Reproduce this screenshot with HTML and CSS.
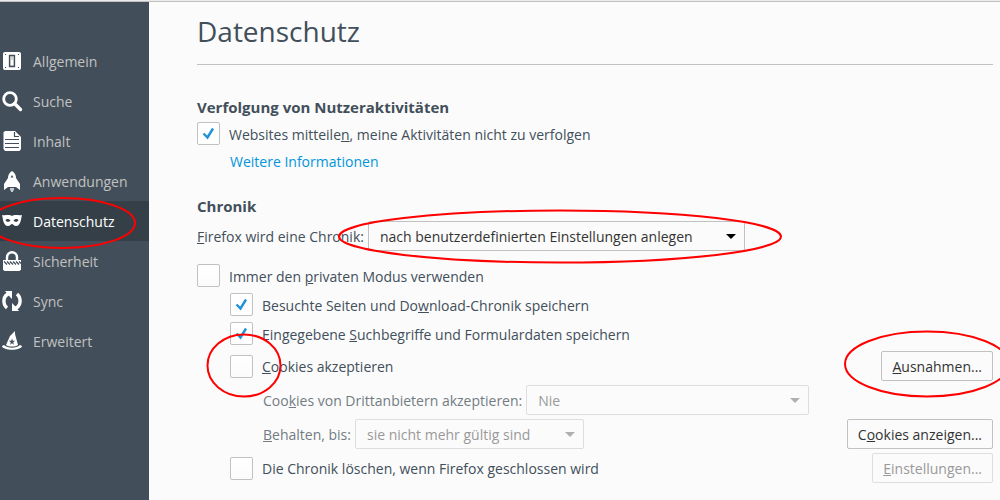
FILE: index.html
```
<!DOCTYPE html>
<html lang="de">
<head>
    <meta charset="UTF-8">
    <meta name="viewport" content="width=device-width, initial-scale=1.0">
    <title>Einstellungen - Datenschutz</title>
    <link rel="stylesheet" href="styles.css">
</head>
<body>
    <nav class="sidebar">
        <a class="category" href="#allgemein">
            <svg class="icon" viewBox="0 0 20 20">
                <rect x="1" y="1" width="18" height="18" rx="2"/>
                <path fill="#424f5a" d="M3 3h1v1H3zM16 3h1v1h-1zM3 16h1v1H3zM16 16h1v1h-1z"/>
                <path fill="#d5d8da" stroke="#424f5a" stroke-width="1.3" d="M7.500 4.500h5v11h-5z"/>
                <path fill="#fff" d="M9 9h2v5H9z"/>
            </svg>
            <span>Allgemein</span>
        </a>
        <a class="category" href="#suche">
            <svg class="icon" viewBox="0 0 20 20">
                <circle cx="8" cy="8" r="6.3" fill="none" stroke="#fff" stroke-width="2.8"/>
                <path d="M12.5 12.5l6 6" stroke="#fff" stroke-width="3.4" stroke-linecap="round"/>
            </svg>
            <span>Suche</span>
        </a>
        <a class="category" href="#inhalt">
            <svg class="icon" viewBox="0 0 20 20">
                <path d="M3 0h10l6 6v12l-1.500 2H3l-1.500-2V1.500z"/>
                <path fill="none" stroke="#424f5a" stroke-width="1.2" d="M12.500 1v4.500H17M3 8.500h14M3 12.500h14M3 16.500h14"/>
            </svg>
            <span>Inhalt</span>
        </a>
        <a class="category" href="#anwendungen">
            <svg class="icon" viewBox="0 0 20 20">
                <path fill-rule="evenodd" d="M10 0c3 2 4 4 4 7l4 6v6l-4-3H6l-4 3v-6l4-6c0-3 1-5 4-7zM8.500 6.500h3L10 4z"/>
                <path fill="#c3c8cc" d="M8 17h4v2l-1 1v1H9v-1l-1-1z"/>
            </svg>
            <span>Anwendungen</span>
        </a>
        <a class="category selected" href="#datenschutz">
            <svg class="icon" viewBox="0 0 20 20">
                <path d="M0 4c3 1 7-1 10 1 3-2 7 0 10-1-1 3-1 11-6 11-2 0-3-2-4-2s-2 2-4 2C1 15 1 7 0 4z"/>
                <path fill="#343f48" d="M3.500 9c1-1.500 3.500-1.500 5 .5-1.500 2-4.500 1.500-5-.5zM16.500 9c-1-1.500-3.500-1.500-5 .5 1.500 2 4.500 1.500 5-.5z"/>
            </svg>
            <span>Datenschutz</span>
        </a>
        <a class="category" href="#sicherheit">
            <svg class="icon" viewBox="0 0 20 20">
                <path d="M5 10V6.500c0-7 10-7 10 0V10" fill="none" stroke="#fff" stroke-width="2.4"/>
                <path d="M1 9h18v9.500L17.500 20h-15L1 18.500z"/>
                <path d="M2 10.500l3 3M5 10.500l3 3M8 10.500l3 3M11 10.500l3 3M14 10.500l3 3M17 10.500l2 2" stroke="#424f5a" stroke-width="1.3"/>
            </svg>
            <span>Sicherheit</span>
        </a>
        <a class="category" href="#sync">
            <svg class="icon" viewBox="0 0 20 20">
                <path d="M8 2.500C.5 4 .5 13 5 17M12 17.500c7.500-1.500 7.500-10.500 3-14.500" fill="none" stroke="#fff" stroke-width="3.4"/>
                <path d="M3 0h7v8L8 6zM17 20h-7v-8l2 2z"/>
            </svg>
            <span>Sync</span>
        </a>
        <a class="category" href="#erweitert">
            <svg class="icon" viewBox="0 0 20 20">
                <path fill-rule="evenodd" d="M13 0v3l3 11c-3 2-9 2-12 0l4-9zM10 7.500l-.8 2.300H6.800l2 1.500-.8 2.400 2-1.500 2 1.500-.8-2.400 2-1.500h-2.400z"/>
                <path d="M0 15l2-1c4 3.500 12 3.500 16 0l2 1c-1 5-19 5-20 0z"/>
            </svg>
            <span>Erweitert</span>
        </a>
    </nav>

    <main class="pane">
        <h1 class="title">Datenschutz</h1>

        <section class="group">
            <h2 class="caption">Verfolgung von Nutzeraktivitäten</h2>
            <div class="check-row">
                <input type="checkbox" class="checkbox" id="track" checked>
                <label for="track">Websites mitteile<u>n</u>, meine Aktivitäten nicht zu verfolgen</label>
            </div>
            <a class="link" href="#info">Weitere Informationen</a>
        </section>

        <section class="group">
            <h2 class="caption">Chronik</h2>
            <div class="row">
                <label for="history"><u>F</u>irefox wird eine Chronik:</label>
                <select class="menu menu-history" id="history">
                    <option>nach benutzerdefinierten Einstellungen anlegen</option>
                </select>
            </div>
            <div class="check-row private">
                <input type="checkbox" class="checkbox" id="private">
                <label for="private">Immer den <u>p</u>rivaten Modus verwenden</label>
            </div>
            <div class="custom">
                <div class="check-row">
                    <input type="checkbox" class="checkbox" id="visited" checked>
                    <label for="visited">Besuchte Seiten und Do<u>w</u>nload-Chronik speichern</label>
                </div>
                <div class="check-row">
                    <input type="checkbox" class="checkbox" id="forms" checked>
                    <label for="forms">Eingegebene <u>S</u>uchbegriffe und Formulardaten speichern</label>
                </div>
                <div class="row">
                    <input type="checkbox" class="checkbox" id="cookies">
                    <label for="cookies"><u>C</u>ookies akzeptieren</label>
                    <button class="button"><u>A</u>usnahmen...</button>
                </div>
                <div class="row sub">
                    <label for="third">Coo<u>k</u>ies von Drittanbietern akzeptieren:</label>
                    <select class="menu menu-third" id="third" disabled>
                        <option>Nie</option>
                    </select>
                </div>
                <div class="row sub">
                    <label for="keep"><u>B</u>ehalten, bis:</label>
                    <select class="menu menu-keep" id="keep" disabled>
                        <option>sie nicht mehr gültig sind</option>
                    </select>
                    <button class="button">C<u>o</u>okies anzeigen...</button>
                </div>
                <div class="row">
                    <input type="checkbox" class="checkbox" id="clear">
                    <label for="clear">Die Chronik löschen, wenn Firefox <u>g</u>eschlossen wird</label>
                    <button class="button" disabled><u>E</u>instellungen...</button>
                </div>
            </div>
        </section>
    </main>

    <!-- red markers around the important settings -->
    <svg class="markers" viewBox="0 0 1000 500" aria-hidden="true">
        <ellipse cx="62" cy="223" rx="73" ry="25"/>
        <ellipse cx="560" cy="236.500" rx="221" ry="26"/>
        <ellipse cx="244" cy="365.500" rx="36.500" ry="31"/>
        <ellipse cx="927" cy="364" rx="82" ry="32.500"/>
    </svg>
</body>
</html>
```
FILE: styles.css
```
* {
    box-sizing: border-box;
}

body {
    margin: 0;
    min-height: 100vh;
    display: flex;
    position: relative;
    overflow: hidden;
    border-top: 1px solid #ececec;
    background-color: #fbfbfb;
    color: #424f5a;
    font-family: "Segoe UI", "Open Sans", sans-serif;
    font-size: 14px;
    line-height: 20px;
}

.sidebar {
    flex: none;
    width: 149px;
    padding-top: 39px;
    border-top: 1px solid #c1c1c1;
    background-color: #424f5a;
}

.category {
    display: flex;
    align-items: center;
    gap: 11px;
    height: 40px;
    padding-left: 2px;
    color: #c1c1c1;
    text-decoration: none;
}

.category span {
    padding-top: 2px;
}

.category.selected {
    background-color: #343f48;
    color: #fff;
}

.icon {
    width: 20px;
    height: 20px;
    fill: #fff;
    overflow: visible;
}

.pane {
    flex: 1;
    padding: 0 7px 0 48px;
    border-top: 1px solid #c1c1c1;
}

.title {
    margin: 0 0 32px;
    padding: 9px 0 13px;
    border-bottom: 1px solid #c1c1c1;
    font-size: 28px;
    font-weight: normal;
    line-height: 40px;
}

.group {
    margin-bottom: 24px;
}

.caption {
    margin: 0 0 5px;
    font-size: 15px;
    font-weight: bold;
    line-height: 20px;
}

.check-row,
.row {
    display: flex;
    align-items: center;
    white-space: nowrap;
}

.check-row {
    align-items: flex-start;
    height: 24px;
    margin-bottom: 5px;
}

.check-row label {
    padding-top: 3px;
}

.row {
    height: 30px;
    margin-bottom: 4px;
}

.row label {
    padding-top: 2px;
}

.private {
    margin-top: 13px;
}

.custom {
    padding-left: 33px;
}

.sub {
    padding-left: 33px;
    color: #737b83;
}

.link {
    display: block;
    margin-left: 33px;
    padding-top: 1px;
    color: #0095dd;
    text-decoration: none;
}

.checkbox {
    appearance: none;
    flex: none;
    width: 23px;
    height: 23px;
    margin: 0 9px 0 0;
    border: 1px solid #c1c1c1;
    border-radius: 2px;
    background: linear-gradient(#fff, #fbfbfb);
}

.checkbox:checked {
    background: url("data:image/svg+xml,%3Csvg xmlns='http://www.w3.org/2000/svg' viewBox='0 0 21 21'%3E%3Cpath d='M5.500 10.500l4 4L15 5.500' fill='none' stroke='%232292d8' stroke-width='2.400'/%3E%3C/svg%3E") #fff;
}

.menu {
    appearance: none;
    height: 30px;
    margin-left: 4px;
    padding: 2px 30px 0 11px;
    border: 1px solid #c1c1c1;
    border-radius: 2px;
    background: url("data:image/svg+xml,%3Csvg xmlns='http://www.w3.org/2000/svg' viewBox='0 0 10 5'%3E%3Cpath d='M0 0h10L5 5z'/%3E%3C/svg%3E") no-repeat right 8px center / 10px 5px #fbfbfb;
    color: #333;
    font: inherit;
}

.menu:disabled {
    background-image: url("data:image/svg+xml,%3Csvg xmlns='http://www.w3.org/2000/svg' viewBox='0 0 10 5'%3E%3Cpath d='M0 0h10L5 5z' fill='%23b0b0b0'/%3E%3C/svg%3E");
    border-color: #dedede;
    color: #999;
    opacity: 1;
}

.menu-history {
    width: 377px;
}

.menu-third {
    width: 283px;
}

.menu-keep {
    width: 229px;
}

.button {
    height: 30px;
    margin-left: auto;
    padding: 2px 10px 0;
    border: 1px solid #c1c1c1;
    border-radius: 2px;
    background-color: #fbfbfb;
    color: #333;
    font: inherit;
}

.button:disabled {
    border-color: #dedede;
    color: #999;
}

.markers {
    position: absolute;
    top: -1px;
    left: 0;
    width: 1000px;
    height: 500px;
    fill: none;
    stroke: #f00;
    stroke-width: 2;
    pointer-events: none;
}
```
